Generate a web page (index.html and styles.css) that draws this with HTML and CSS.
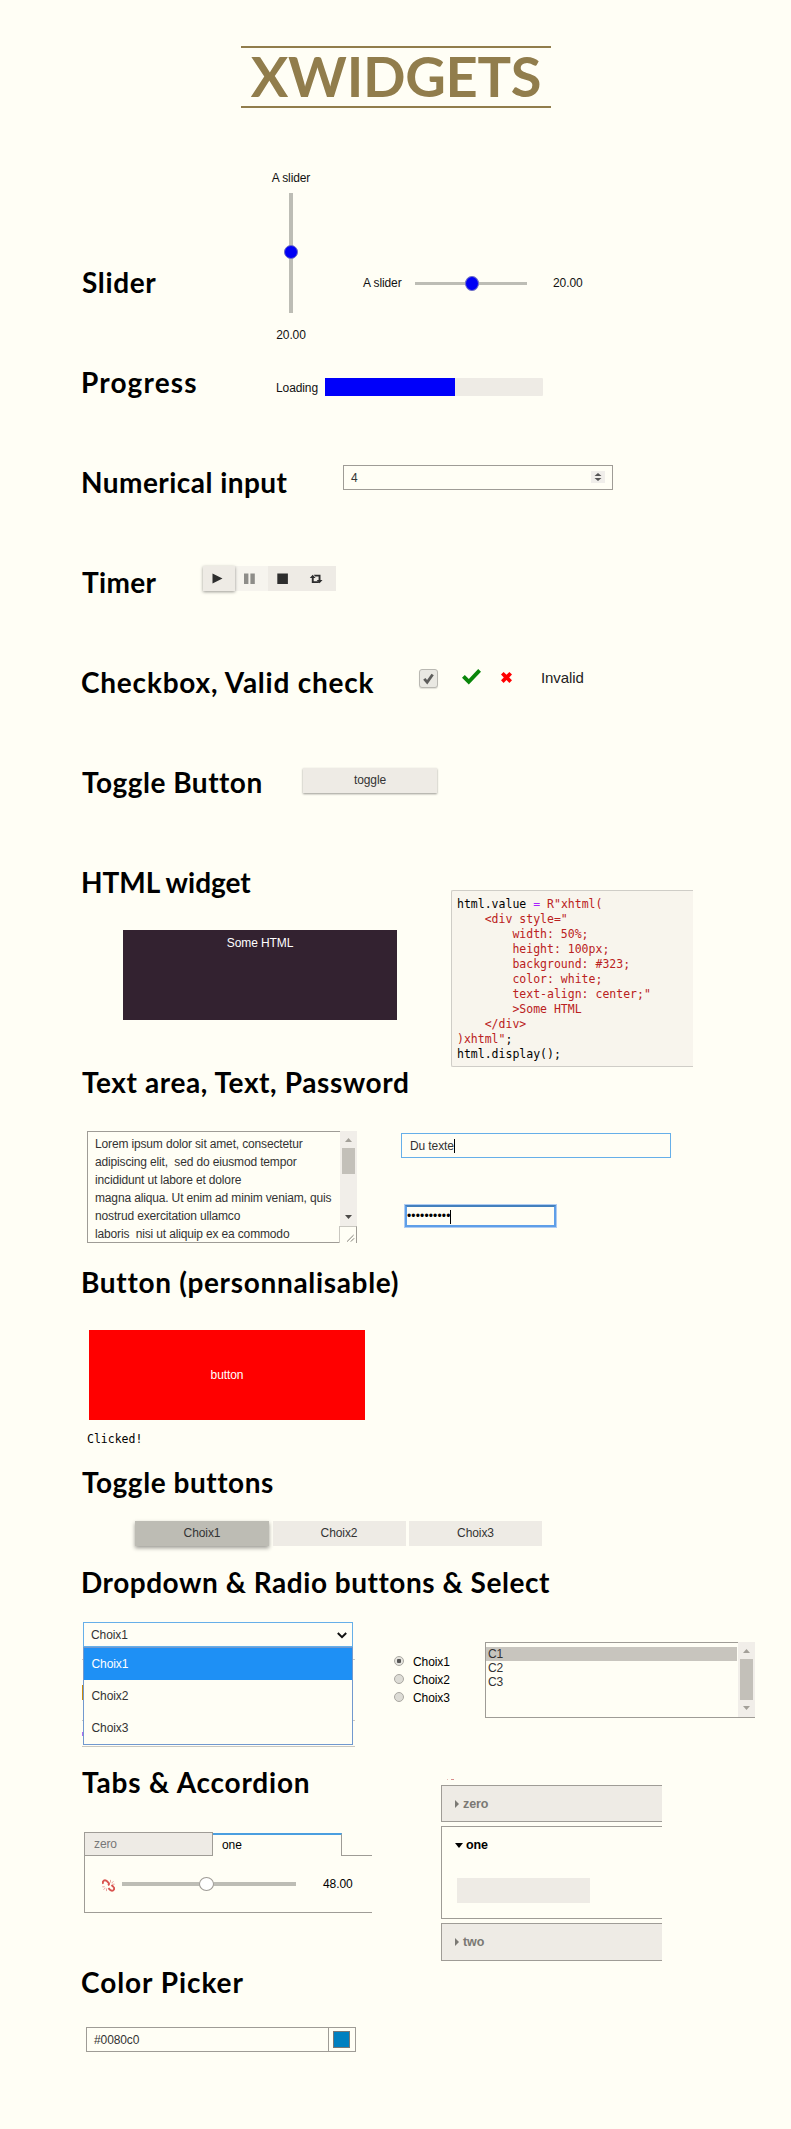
FILE: index.html
```html
<!DOCTYPE html>
<html lang="en">
<head>
<meta charset="utf-8">
<title>xwidgets</title>
<link rel="stylesheet" href="styles.css">
</head>
<body>
<header class="banner"><h1 class="title">XWIDGETS</h1></header>
<main>
  <section class="section sec-slider">
    <h2 class="heading h-slider">Slider</h2>
    <div class="vslider">
      <span>A slider</span>
      <div class="vtrack"><i class="vknob"></i></div>
      <span>20.00</span>
    </div>
    <div class="hslider">
      <span class="hlabel">A slider</span>
      <div class="htrack"><i class="hknob"></i></div>
      <span class="hvalue">20.00</span>
    </div>
  </section>

  <section class="section sec-progress">
    <h2 class="heading h-progress">Progress</h2>
    <div class="progress">
      <span class="plabel">Loading</span>
      <div class="pbar"><div class="pfill"></div></div>
    </div>
  </section>

  <section class="section sec-number">
    <h2 class="heading h-number">Numerical input</h2>
    <div class="field number">
      <span>4</span>
      <svg class="spinner" viewBox="0 0 14 12"><path d="M3.5 5 7 2l3.5 3zM3.5 7 7 10l3.5-3z"/></svg>
    </div>
  </section>

  <section class="section sec-timer">
    <h2 class="heading h-timer">Timer</h2>
    <div class="timer">
      <div class="tbtn raised"><svg viewBox="0 0 34 25"><path d="M9.5 7.5v10l10-5z"/></svg></div>
      <div class="tbtn faded"><svg viewBox="0 0 34 25"><path d="M9 7.5h4.4v10.4H9zM15.4 7.5h4.4v10.4h-4.4z"/></svg></div>
      <div class="tbtn"><svg viewBox="0 0 34 25"><path d="M9.3 7.5h10.6V18H9.3z"/></svg></div>
      <div class="tbtn"><svg viewBox="0 0 34 25"><path d="M7.8 12 10.700 8.800l2.900 3.200h-1.900v3.200h4l1.500 1.800H9.800v-5zM20.500 14l-2.900 3.200L14.700 14h1.900v-3.400h-3.400l-1.500-1.800h6.800V14z"/></svg></div>
    </div>
  </section>

  <section class="section sec-check">
    <h2 class="heading h-check">Checkbox, Valid check</h2>
    <div class="checkbox"><svg viewBox="0 0 18 18"><path d="M4.5 9.4 7.6 13 13.4 4.8" fill="none" stroke="#5d5d5b" stroke-width="3"/></svg></div>
    <svg class="tick" viewBox="0 0 19 16"><path d="M0 8.7 2.8 6l4 4.1L16.200 0 19 2.700 6.800 15.500z"/></svg>
    <svg class="cross" viewBox="0 0 11 11"><path d="M0 2.600 2.600 0l2.900 2.800L8.400 0 11 2.600 8.200 5.400 11 8.200l-2.600 2.700-2.900-2.900-2.900 2.900L0 8.200l2.800-2.800z"/></svg>
    <span class="invalid">Invalid</span>
  </section>

  <section class="section sec-toggle">
    <h2 class="heading h-toggle">Toggle Button</h2>
    <div class="btn toggle">toggle</div>
  </section>

  <section class="section sec-html">
    <div>
      <h2 class="heading h-html">HTML widget</h2>
      <div class="somehtml">Some HTML</div>
    </div>
    <pre class="code">html.value <span class="op">=</span> <span class="str">R"xhtml(</span>
<span class="str">    &lt;div style="</span>
<span class="str">        width: 50%;</span>
<span class="str">        height: 100px;</span>
<span class="str">        background: #323;</span>
<span class="str">        color: white;</span>
<span class="str">        text-align: center;"</span>
<span class="str">        &gt;Some HTML</span>
<span class="str">    &lt;/div&gt;</span>
<span class="str">)xhtml"</span>;
html.display();</pre>
  </section>

  <section class="section sec-text">
    <h2 class="heading h-text">Text area, Text, Password</h2>
    <div class="textrow">
      <div class="textarea">
        <div class="lorem">Lorem ipsum dolor sit amet, consectetur
adipiscing elit,&nbsp; sed do eiusmod tempor
incididunt ut labore et dolore
magna aliqua. Ut enim ad minim veniam, quis
nostrud exercitation ullamco
laboris&nbsp; nisi ut aliquip ex ea commodo</div>
        <div class="side">
          <svg class="bar" viewBox="0 0 17 95"><path fill="#a3a099" d="M5 11l3.500-4 3.500 4z"/><path fill="#c3c0b9" d="M2 17h13v26H2z"/><path fill="#4c4b49" d="M5 84h7l-3.500 4z"/></svg>
          <svg class="grip" viewBox="0 0 17 17"><path d="M7.500 15.500l7-7M11.500 15.500l3.500-3.500" stroke="#77756f" fill="none"/></svg>
        </div>
      </div>
      <div class="inputs">
        <div class="field focus">Du texte<i class="caret"></i></div>
        <div class="password"><span class="dots">••••••••••</span><i class="caret"></i></div>
      </div>
    </div>
  </section>

  <section class="section sec-button">
    <h2 class="heading h-button">Button (personnalisable)</h2>
    <div class="redbtn">button</div>
    <div class="clicked">Clicked!</div>
  </section>

  <section class="section sec-toggles">
    <h2 class="heading h-toggles">Toggle buttons</h2>
    <div class="toggles">
      <div class="btn active">Choix1</div>
      <div class="btn">Choix2</div>
      <div class="btn">Choix3</div>
    </div>
  </section>

  <section class="section sec-select">
    <h2 class="heading h-select">Dropdown &amp; Radio buttons &amp; Select</h2>
    <div class="selectrow">
      <div class="dropdown">
        <i class="peek p1"></i><i class="peek p2"></i><i class="peek p3"></i><i class="peek p4"></i><i class="peek p5"></i>
        <div class="current">Choix1<svg class="chev" viewBox="0 0 10 7"><path d="M.8 1 5 5.200 9.200 1" fill="none" stroke="#111" stroke-width="2"/></svg></div>
        <div class="options">
          <div class="option picked">Choix1</div>
          <div class="option">Choix2</div>
          <div class="option">Choix3</div>
        </div>
      </div>
      <div class="radios">
        <div class="radio"><i class="dot on"></i>Choix1</div>
        <div class="radio"><i class="dot"></i>Choix2</div>
        <div class="radio"><i class="dot"></i>Choix3</div>
      </div>
      <div class="listbox">
        <div class="items">
          <div class="item chosen">C1</div>
          <div class="item">C2</div>
          <div class="item">C3</div>
        </div>
        <svg class="listbar" viewBox="0 0 17 75"><path fill="#a3a099" d="M5 11l3.500-4 3.500 4zM5 64h7l-3.500 4z"/><path fill="#c3c0b9" d="M2 17h13v41H2z"/></svg>
      </div>
    </div>
  </section>

  <section class="section sec-tabs">
    <div>
      <h2 class="heading h-tabs">Tabs &amp; Accordion</h2>
      <div class="tabs">
        <div class="tabbar">
          <div class="tab">zero</div>
          <div class="tab current-tab">one</div>
          <div class="tabrest"></div>
        </div>
        <div class="tabpanel">
          <svg class="unlink" viewBox="0 0 13 13" fill="none"><path d="M1.300 4.800C.2 3 1.300 1.200 3 1.200c1.200 0 2.300 1 3.600 2.600.6.900.3 1.900-.6 2.500M11.700 8.200c1.100 1.800 0 3.600-1.700 3.600-1.200 0-2.300-1-3.600-2.600M11.700 8.200 9.500 6" stroke="#d9534f" stroke-width="1.900"/><path d="M8.500 3.500V.9M9.600 4.200l1.900-2M10.200 5.200h2.500M4.500 9.500v2.600M3.400 8.800l-1.900 2M2.800 7.800H.3" stroke="#e9a5a0"/></svg>
          <div class="tabtrack"><i class="tabknob"></i></div>
          <span class="tabvalue">48.00</span>
        </div>
      </div>
    </div>
    <div class="accordion">
      <div class="crumbs"><i></i><i></i></div>
      <div class="fold"><svg class="tri" viewBox="0 0 4 8"><path d="M0 0v8l4-4z"/></svg>zero</div>
      <div class="fold open">
        <div class="foldhead"><svg class="tridown" viewBox="0 0 8 5"><path d="M0 0h8L4 5z"/></svg>one</div>
        <div class="blank"></div>
      </div>
      <div class="fold last"><svg class="tri" viewBox="0 0 4 8"><path d="M0 0v8l4-4z"/></svg>two</div>
    </div>
  </section>

  <section class="section sec-color">
    <h2 class="heading h-color">Color Picker</h2>
    <div class="picker">
      <span class="hex">#0080c0</span>
      <div class="well"><div class="swatch"></div></div>
    </div>
  </section>
</main>
</body>
</html>
```

FILE: styles.css
```css
* { box-sizing: border-box; }
body {
  margin: 0;
  height: 2129px;
  overflow: hidden;
  background: #fffef5;
  color: #111;
  font: 12px/16px "Liberation Sans", Arial, sans-serif;
  letter-spacing: -0.1px;
}
svg { display: block; }
i { display: block; }

/* Banner */
.banner { height: 170px; padding-top: 46px; display: flex; justify-content: center; align-items: flex-start; }
.title {
  margin: 0 0 0 1px;
  width: 310px;
  height: 62px;
  border: solid #917d4c;
  border-width: 2px 0;
  text-align: center;
  font: bold 56px/55px Lato, sans-serif;
  letter-spacing: -0.3px;
  color: #917d4c;
}

/* Sections */
.section { padding-left: 81px; height: 100px; }
.heading { margin: 0; font: bold 28px/34px Lato, sans-serif; white-space: nowrap; color: #000; }
.h-slider { margin: 95px 0 0 1px; letter-spacing: .64px; }
.h-progress { letter-spacing: 1.14px; }
.h-number { letter-spacing: .46px; }
.h-timer { margin-left: 1px; letter-spacing: .3px; }
.h-check { letter-spacing: .78px; }
.h-toggle { margin-left: 1px; letter-spacing: .5px; }
.h-html { letter-spacing: -.03px; }
.h-text { margin-left: 1px; letter-spacing: .6px; }
.h-button { letter-spacing: .68px; }
.h-toggles { margin-left: 1px; letter-spacing: .55px; }
.h-select { letter-spacing: .53px; }
.h-tabs { margin-left: 1px; letter-spacing: .8px; }
.h-color { letter-spacing: .94px; }

/* Slider */
.sec-slider { height: 195px; display: grid; grid-template-columns: 190px 92px 1fr; align-items: start; }
.vslider { width: 40px; display: flex; flex-direction: column; align-items: center; white-space: nowrap; }
.vtrack { position: relative; width: 4px; height: 120px; margin: 7px 0 14px; background: #bdbdb5; }
.vknob { position: absolute; left: -5px; top: 52px; width: 14px; height: 14px; border-radius: 50%; background: #0000f5; border: 1px solid #6f6fc4; }
.hslider { margin-top: 105px; display: flex; align-items: center; }
.hlabel { width: 52px; }
.htrack { position: relative; width: 112px; height: 3px; background: #bdbdb5; }
.hknob { position: absolute; left: 50px; top: -6px; width: 14px; height: 15px; border-radius: 50%; background: #0000f5; border: 1px solid #6f6fc4; }
.hvalue { margin-left: 26px; }

/* Progress */
.sec-progress { display: grid; grid-template-columns: 195px 1fr; align-items: start; }
.progress { margin-top: 13px; display: flex; }
.plabel { width: 49px; margin-top: 2px; }
.pbar { width: 218px; height: 18px; background: #eeebe5; border-radius: 1px; }
.pfill { width: 130px; height: 18px; background: #0000fa; }

/* Text fields */
.field { border: 1px solid #9f9c96; height: 25px; padding: 4px 8px 0; color: #333; }
.sec-number { display: grid; grid-template-columns: 262px 270px; align-items: start; }
.number { display: flex; justify-content: space-between; padding: 4px 7px 0; }
.spinner { width: 14px; height: 12px; margin-top: 1px; background: #f0eeea; fill: #555; }

/* Timer */
.sec-timer { display: grid; grid-template-columns: 122px 133px; align-items: start; }
.timer { margin-top: 1px; height: 25px; display: grid; grid-template-columns: 32px 33px 34px 34px; }
.tbtn { background: #eeebe5; overflow: hidden; height: 25px; }
.tbtn svg { width: 34px; height: 25px; fill: #2d2d2d; }
.raised { box-shadow: 0 1px 3px rgba(0,0,0,.4); position: relative; }
.faded { background: #f6f4ee; }
.faded svg { fill: #8e8d89; }

/* Checkbox and valid check */
.sec-check { display: grid; grid-template-columns: 338px 43px 39px 40px auto; align-items: start; }
.checkbox { width: 19px; height: 19px; margin-top: 4px; border: 1px solid #b9b8b2; border-radius: 3px; background: #e9e8e2; box-shadow: 0 1px 1px rgba(0,0,0,.12); }
.checkbox svg { width: 17px; height: 17px; }
.tick { width: 19px; height: 16px; margin-top: 4px; fill: #0a860a; }
.cross { width: 11px; height: 11px; margin-top: 7px; fill: #f00; }
.invalid { margin-top: 4px; font-size: 15px; line-height: 18px; color: #222; }

/* Buttons */
.btn { height: 25px; line-height: 25px; text-align: center; background: #eeebe5; color: #333; }
.sec-toggle { display: grid; grid-template-columns: 222px 134px; align-items: start; }
.toggle { margin: 3px 0 0; box-shadow: 0 1px 2px rgba(0,0,0,.4); }

/* HTML widget */
.sec-html { height: 200px; display: grid; grid-template-columns: 370px 242px; align-items: start; }
.somehtml { width: 274px; height: 90px; margin: 31px 0 0 42px; padding-top: 5px; background: #332230; color: #fff; text-align: center; }
.code {
  margin: 25px 0 0;
  height: 177px;
  padding: 6px 0 0 5px;
  border: solid #cfcdc7;
  border-width: 1px 0 1px 1px;
  border-radius: 2px 0 0 2px;
  background: #f8f5ed;
  font: 11.5px/15px "DejaVu Sans Mono", monospace;
  letter-spacing: 0;
  color: #000;
}
.op { color: #a2f; }
.str { color: #ba2121; }

/* Text widgets */
.sec-text { height: 200px; }
.textrow { display: flex; margin-top: 32px; }
.textarea { width: 270px; height: 112px; margin-left: 6px; display: flex; }
.lorem {
  width: 253px;
  height: 112px;
  overflow: hidden;
  padding: 3px 0 0 7px;
  border: solid #9f9c96;
  border-width: 1px 0 1px 1px;
  line-height: 18px;
  letter-spacing: -.15px;
  white-space: pre;
  color: #333;
}
.bar { width: 17px; height: 95px; background: #f1eee9; }
.grip { width: 18px; height: 17px; margin-left: -1px; border: solid #c9c7c0; border-width: 1px 1px 0; border-right-color: #9f9c96; }
.inputs { margin: 2px 0 0 44px; }
.focus { width: 270px; display: flex; border-color: #66afe9; }
.caret { width: 1px; height: 14px; background: #000; }
.focus .caret { margin-top: 1px; }
.password { width: 153px; height: 24px; margin: 46px 0 0 3px; padding-top: 4px; border: 3px solid #5f9fe8; border-top-color: #4380bd; outline: 1px solid #aeccf2; outline-offset: -1px; display: flex; align-items: flex-start; }
.dots { width: 43px; line-height: 11px; letter-spacing: .15px; color: #000; }
.password .caret { margin-top: -1px; }

/* Custom button */
.sec-button { height: 200px; }
.redbtn { width: 276px; height: 90px; margin: 31px 0 0 8px; background: #f00; color: #fff; text-align: center; line-height: 90px; }
.clicked { margin: 12px 0 0 6px; font: 11.5px/15px "DejaVu Sans Mono", monospace; letter-spacing: 0; color: #000; }

/* Toggle buttons */
.toggles { display: grid; grid-template-columns: 134px 133px 133px; gap: 3.500px; margin: 22px 0 0 54px; width: 420px; }
.active { background: #bdbcb4; box-shadow: 0 2px 4px rgba(0,0,0,.4); }

/* Dropdown, radios, list */
.sec-select { height: 200px; }
.selectrow { display: flex; margin: 23px 0 0 2px; align-items: flex-start; }
.dropdown { width: 270px; position: relative; }
.current { position: relative; height: 25px; padding: 4px 5px 0 7px; border: 1px solid #66afe9; display: flex; justify-content: space-between; color: #333; background: #fffef5; }
.chev { width: 10px; height: 7px; margin-top: 5px; }
.options { position: relative; height: 98px; border: 1px solid #7199cf; background: #fffef5; }
.option { height: 32px; line-height: 32px; padding-left: 7.500px; color: #333; }
.picked { background: #1e90f5; color: #fff; }
.peek { position: absolute; background: #c9c7c0; left: -1px; width: 273px; height: 1px; }
.p1 { top: 37px; }
.p2 { top: 98px; }
.p3 { top: 124px; }
.p4 { top: 63px; height: 15px; width: 1px; background: #c98a10; }
.p5 { top: 110px; height: 4px; width: 1px; background: #b26cf0; }
.radios { width: 91px; margin: 32px 0 0 41px; }
.radio { height: 18px; display: flex; gap: 9px; color: #000; }
.dot { width: 10px; height: 10px; margin-top: 2px; border-radius: 50%; border: 1px solid #aaa8a2; background: #dddcd6; }
.on { background: radial-gradient(circle, #555 0 2px, #e5e4de 2.500px); }
.listbox { width: 270px; height: 76px; margin-top: 20px; display: flex; border-bottom: 1px solid #9f9c96; }
.items { width: 253px; padding: 4px 1px 0 0; border: solid #9f9c96; border-width: 1px 0 0 1px; }
.item { height: 14px; line-height: 15px; padding-left: 2px; color: #333; }
.chosen { background: #c8c5be; }
.listbar { width: 17px; height: 75px; background: #f1eee9; }

/* Tabs and accordion */
.sec-tabs { height: 200px; display: grid; grid-template-columns: 360px 221px; align-items: start; }
.tabs { margin: 33px 0 0 3px; width: 288px; }
.tabbar { display: flex; height: 24px; align-items: stretch; }
.tab { width: 129px; padding: 3px 0 0 9px; border: 1px solid #9f9c96; background: #eeebe5; color: #777; }
.current-tab { margin-top: 1px; border-width: 2px 1px 0 0; border-top-color: #4b9fe0; background: #fffef5; color: #000; padding-top: 2px; }
.tabrest { flex: 1; border-bottom: 1px solid #9f9c96; }
.tabpanel { height: 57px; border: solid #9f9c96; border-width: 0 0 1px 1px; display: flex; align-items: center; padding-left: 17px; }
.unlink { width: 13px; height: 13px; margin-top: 3px; }
.tabtrack { position: relative; width: 174px; height: 4px; margin-left: 7px; background: #bdbdb5; }
.tabknob { position: absolute; left: 77px; top: -5px; width: 15px; height: 14px; border-radius: 50%; border: 1px solid #9f9c96; background: #fff; }
.tabvalue { margin-left: 27px; color: #000; }
.accordion { padding-top: 14px; }
.crumbs { height: 6px; display: flex; gap: 3px; padding-left: 6px; }
.crumbs i { width: 1px; height: 1px; background: #e6bbb5; }
.crumbs i + i { width: 3px; background: #d98e8c; }
.fold { height: 37px; border: solid #9f9c96; border-width: 1px 0 1px 1px; background: #eeebe5; color: #7b7974; padding-left: 13px; font-weight: bold; font-size: 12.5px; display: flex; align-items: center; }
.tri { width: 4px; height: 8px; margin-right: 4px; fill: #7b7974; }
.fold.open { height: 93px; margin: 4px 0; display: block; background: #fffef5; color: #000; padding-top: 10px; }
.foldhead { display: flex; align-items: center; }
.tridown { width: 8px; height: 5px; margin-right: 3px; }
.blank { width: 133px; height: 25px; margin: 25px 0 0 2px; background: #eeebe5; }
.last { height: 38px; }

/* Color picker */
.picker { width: 270px; height: 25px; margin: 28px 0 0 5px; border: 1px solid #9f9c96; display: flex; color: #333; }
.hex { flex: 1; padding: 4px 0 0 7px; }
.well { width: 27px; border-left: 1px solid #9f9c96; padding: 3px 4px; }
.swatch { width: 17px; height: 17px; background: #0080c0; border: 1px solid #777; }
```
